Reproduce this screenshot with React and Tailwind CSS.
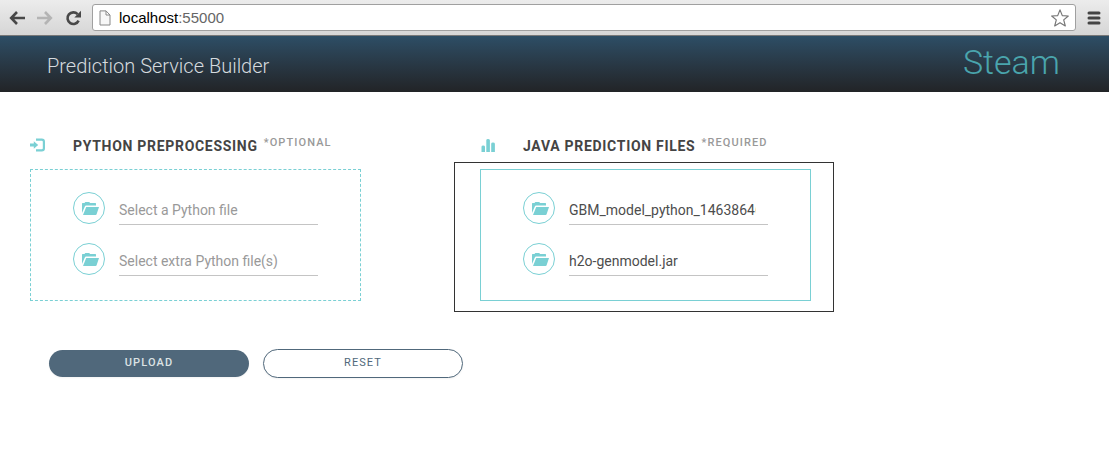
import React from "react";

function FolderIcon() {
  return (
    <svg aria-hidden="true" viewBox="0 0 17 13" className="h-[13px] w-[17px] fill-[#7ad0d4]">
      <path d="M0 11V1.600Q0 1 .6 1H2.500L3.300 0H7.300L8 1H13.400Q14 1 14 1.600V3.500H4.200Q3.200 3.500 2.800 4.400Z" />
      <path d="M4.200 5H17L14.600 12.300Q14.300 13 13.600 13H1Z" />
    </svg>
  );
}

function SignInIcon() {
  return (
    <svg aria-hidden="true" viewBox="0 0 16 14" className="h-[14px] w-[16px]">
      <path d="M6 1.600H11.800Q13.900 1.600 13.900 3.700V10.300Q13.900 12.400 11.800 12.400H6" fill="none" stroke="#7ad0d4" strokeWidth="2.2" />
      <path d="M0 5.600H3.800V3.300L8.200 7 3.800 10.700V8.400H0z" fill="#7ad0d4" />
    </svg>
  );
}

function BarsIcon() {
  return (
    <svg aria-hidden="true" viewBox="0 0 16 14" className="h-[14px] w-[16px] fill-[#7ad0d4]">
      <path d="M1.500 14V8.800Q1.500 7.500 3.200 7.500T5 8.800V14zM6.300 14V2.200Q6.300 1 8 1T9.900 2.200V14zM11.200 14V5.800Q11.200 4.500 13 4.500T14.900 5.800V14z" />
    </svg>
  );
}

function BrowserBar() {
  return (
    <div className="flex h-9 items-center border-b border-[#777] bg-linear-to-b from-[#ececec] to-[#d6d6d6] pr-2 pl-[9px]">
      <button type="button" aria-label="Back" className="mr-3">
        <svg viewBox="0 0 16 14" className="h-[14px] w-[16px]" fill="none" stroke="#484848" strokeWidth="2.6">
          <path d="M8 1L2.2 7 8 13M2.5 7H16" />
        </svg>
      </button>
      <button type="button" aria-label="Forward" className="mr-3">
        <svg viewBox="0 0 16 14" className="h-[14px] w-[16px]" fill="none" stroke="#b4b4b4" strokeWidth="2.6">
          <path d="M8 1l5.8 6L8 13M13.5 7H0" />
        </svg>
      </button>
      <button type="button" aria-label="Reload" className="mr-[10px]">
        <svg viewBox="0 0 17 16" className="h-[16px] w-[17px]">
          <path d="M12.600 4.200A5.800 5.800 0 1 0 13.600 10.600" fill="none" stroke="#484848" strokeWidth="2.6" />
          <path d="M16 .8v6.700H9.300z" fill="#484848" />
        </svg>
      </button>
      <div className="flex h-[27px] flex-1 items-center rounded-[3px] border border-[#a0a0a0] bg-white px-[6px]">
        <svg aria-hidden="true" viewBox="0 0 12 16" className="h-4 w-3" fill="#f7f7f7" stroke="#888">
          <path d="M1 .9h6L11 5v10H1zM7 .9V5h4" />
        </svg>
        <p className="flex-1 pl-2 font-['Liberation_Sans',sans-serif] text-[15px] leading-5 text-black">
          localhost<span className="text-[#666]">:55000</span>
        </p>
        <button type="button" aria-label="Bookmark this page">
          <svg viewBox="0 0 18 18" className="h-[18px] w-[18px]" fill="#fff" stroke="#777" strokeWidth="1.2" strokeLinejoin="round">
            <path d="M9 .9l2.3 5.7 6 .4-4.600 3.900 1.600 6L9 13.700l-5.300 3.200 1.600-6L.7 7l6-.4z" />
          </svg>
        </button>
      </div>
      <button type="button" aria-label="Menu" className="ml-[11px]">
        <svg viewBox="0 0 14 14" className="h-[14px] w-[14px]" stroke="#444" strokeWidth="3" strokeLinecap="round">
          <path d="M2 2h10M2 7h10M2 12h10" />
        </svg>
      </button>
    </div>
  );
}

function FileField({ id, label, value }) {
  return (
    <div className="flex h-[33px] items-start gap-[14px]">
      <label
        htmlFor={id}
        aria-label={label}
        className="flex h-8 w-8 shrink-0 cursor-pointer items-center justify-center rounded-full border border-[#7ad0d4] pt-px pl-[2px]"
      >
        <FolderIcon />
      </label>
      <input
        id={id}
        type="text"
        aria-label={label}
        placeholder={label}
        defaultValue={value}
        className="h-[33px] w-full min-w-0 border-b border-[#c4c4c4] bg-transparent pt-1 pr-3 text-[14px] text-[#4d4d4d] outline-none placeholder:text-[#999]"
      />
    </div>
  );
}

function FileGroup({ icon, title, note, solid, fields }) {
  return (
    <section>
      <div className="flex h-6 items-center">
        <span className="w-[43px] shrink-0 pb-[2px]">{icon}</span>
        <h2 className="text-[14px] font-bold tracking-wider whitespace-nowrap text-[#444] uppercase">{title}</h2>
        <span className="pb-[6px] pl-[6px] text-[11px] font-medium tracking-widest text-[#999] uppercase">{note}</span>
      </div>
      <div className="relative mt-[11px]">
        {solid && (
          <div className="pointer-events-none absolute -top-[7px] -right-[23px] -bottom-[11px] -left-[26px] border border-[#333]" />
        )}
        <div
          className={
            "flex flex-col gap-[18px] border border-[#7ad0d4] px-[42px] pt-[22px] pb-6 " +
            (solid ? "border-solid" : "border-dashed")
          }
        >
          {fields.map((f) => (
            <FileField key={f.id} {...f} />
          ))}
        </div>
      </div>
    </section>
  );
}

export default function App() {
  return (
    <div className="min-h-screen bg-white font-[Roboto,sans-serif]">
      <BrowserBar />
      <header className="flex h-14 items-center justify-between bg-linear-to-b from-[#2d4e66] to-[#222427] pr-[49px] pl-[47px]">
        <h1 className="pt-1 text-[20px] font-light text-[#d5dade]">Prediction Service Builder</h1>
        <span className="pb-1 text-[34px] leading-10 font-light text-[#4aa5ad]">Steam</span>
      </header>
      <main className="px-[30px] pt-[42px]">
        <div className="grid max-w-[781px] grid-cols-2 gap-[119px]">
          <FileGroup
            icon={<SignInIcon />}
            title="Python Preprocessing"
            note="*Optional"
            fields={[
              { id: "python-file", label: "Select a Python file" },
              { id: "python-extra", label: "Select extra Python file(s)" },
            ]}
          />
          <FileGroup
            icon={<BarsIcon />}
            title="Java Prediction Files"
            note="*Required"
            solid
            fields={[
              { id: "java-model", label: "Select the POJO file", value: "GBM_model_python_1463864606917_1.java" },
              { id: "java-jar", label: "Select the jar file", value: "h2o-genmodel.jar" },
            ]}
          />
        </div>
        <div className="mt-12 flex items-center gap-[14px] pl-[19px] text-[11px]">
          <button type="button" className="h-[27px] w-[200px] rounded-full bg-[#50687b] font-medium tracking-widest text-[#dce2e4] shadow-xs">
            UPLOAD
          </button>
          <button type="button" className="h-[29px] w-[200px] rounded-full border border-[#50687b] bg-white tracking-widest text-[#50687b] shadow-xs">
            RESET
          </button>
        </div>
      </main>
    </div>
  );
}
